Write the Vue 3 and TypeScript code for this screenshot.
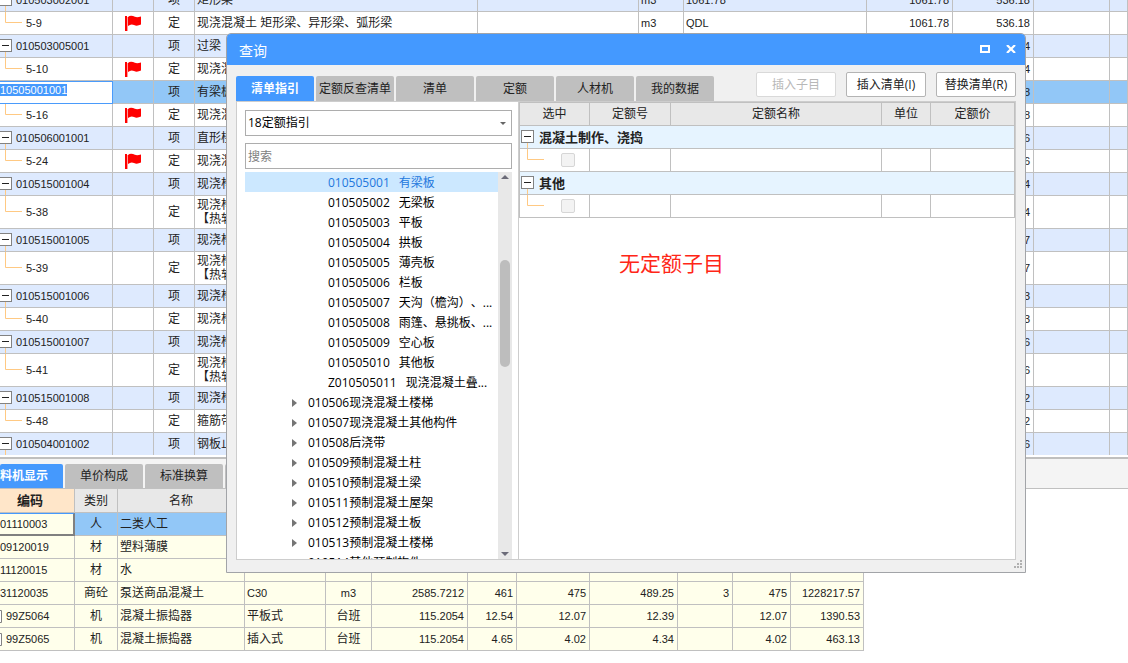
<script setup lang="ts">
import { onMounted, ref } from 'vue'

interface QuotaRow {
  code: string
  child?: boolean
  tall?: boolean
  flag?: boolean
  editing?: boolean
  name: string
  unit?: string
  qty?: string
  price?: string
  total: string
}

const rows: QuotaRow[] = [
  { code: '010503002001', name: '矩形梁', unit: 'm3', qty: '1061.78', price: '1061.78', total: '536.18' },
  { code: '5-9', child: true, flag: true, name: '现浇混凝土 矩形梁、异形梁、弧形梁', unit: 'm3', qty: 'QDL', price: '1061.78', total: '536.18' },
  { code: '010503005001', name: '过梁', total: '4' },
  { code: '5-10', child: true, flag: true, name: '现浇混', total: '4' },
  { code: '10505001001', editing: true, name: '有梁板', total: '8' },
  { code: '5-16', child: true, flag: true, name: '现浇混', total: '8' },
  { code: '010506001001', name: '直形楼', total: '6' },
  { code: '5-24', child: true, flag: true, name: '现浇混', total: '6' },
  { code: '010515001004', name: '现浇构', total: '4' },
  { code: '5-38', child: true, tall: true, name: '现浇构\n【热轧', total: '4' },
  { code: '010515001005', name: '现浇构', total: '7' },
  { code: '5-39', child: true, tall: true, name: '现浇构\n【热轧', total: '7' },
  { code: '010515001006', name: '现浇构', total: '3' },
  { code: '5-40', child: true, name: '现浇构', total: '3' },
  { code: '010515001007', name: '现浇构', total: '6' },
  { code: '5-41', child: true, tall: true, name: '现浇构\n【热轧', total: '6' },
  { code: '010515001008', name: '现浇构', total: '2' },
  { code: '5-48', child: true, name: '箍筋带', total: '2' },
  { code: '010504001002', name: '钢板止', total: '6' },
]

const detailTabs = ['料机显示', '单价构成', '标准换算']

interface Material {
  code: string
  box?: boolean
  kind: string
  name: string
  spec?: string
  unit?: string
  nums: string[]
}

const blank = ['', '', '', '', '', '', '']
const materials: Material[] = [
  { code: '01110003', kind: '人', name: '二类人工', nums: blank },
  { code: '09120019', kind: '材', name: '塑料薄膜', nums: blank },
  { code: '11120015', kind: '材', name: '水', nums: blank },
  { code: '31120035', kind: '商砼', name: '泵送商品混凝土', spec: 'C30', unit: 'm3', nums: ['2585.7212', '461', '475', '489.25', '3', '475', '1228217.57'] },
  { code: '99Z5064', box: true, kind: '机', name: '混凝土振捣器', spec: '平板式', unit: '台班', nums: ['115.2054', '12.54', '12.07', '12.39', '', '12.07', '1390.53'] },
  { code: '99Z5065', box: true, kind: '机', name: '混凝土振捣器', spec: '插入式', unit: '台班', nums: ['115.2054', '4.65', '4.02', '4.34', '', '4.02', '463.13'] },
]

const queryTabs = ['清单指引', '定额反查清单', '清单', '定额', '人材机', '我的数据']
const activeTab = ref(0)

const leaves = [
  ['010505001', '有梁板'],
  ['010505002', '无梁板'],
  ['010505003', '平板'],
  ['010505004', '拱板'],
  ['010505005', '薄壳板'],
  ['010505006', '栏板'],
  ['010505007', '天沟（檐沟）、...'],
  ['010505008', '雨篷、悬挑板、...'],
  ['010505009', '空心板'],
  ['010505010', '其他板'],
  ['Z010505011', '现浇混凝土叠...'],
]
const branches = [
  '010506现浇混凝土楼梯',
  '010507现浇混凝土其他构件',
  '010508后浇带',
  '010509预制混凝土柱',
  '010510预制混凝土梁',
  '010511预制混凝土屋架',
  '010512预制混凝土板',
  '010513预制混凝土楼梯',
  '010514其他预制构件',
]
const groups = ['混凝土制作、浇捣', '其他']
const keyword = ref('')
const guide = ref('18定额指引')

const editor = ref<HTMLInputElement[]>([])
onMounted(() => {
  editor.value[0]?.focus()
  editor.value[0]?.select()
})
</script>

<template>
  <main class="app">
    <section class="upper">
      <table class="grid list">
        <colgroup>
          <col class="u1" /><col class="u2" /><col class="u2" /><col class="u3" /><col class="u4" />
          <col class="u5" /><col class="u6" /><col class="u7" /><col class="u8" /><col class="u9" /><col />
        </colgroup>
        <tbody>
          <tr
            v-for="row in rows"
            :key="row.code"
            :class="{ parent: !row.child, tall: row.tall, current: row.editing }"
          >
            <td class="code">
              <input v-if="row.editing" ref="editor" class="editor" type="text" aria-label="项目编码" :value="row.code" />
              <div v-else-if="row.child" class="node">
                <svg v-if="row.tall" width="22" height="32"><path d="M5.5 0V15.5H22" class="link" /></svg>
                <svg v-else width="22" height="22"><path d="M5.5 0V10.5H22" class="link" /></svg>
                <span class="sub">{{ row.code }}</span>
              </div>
              <div v-else class="node">
                <svg width="12" height="22" viewBox="1 0 12 22">
                  <rect x=".5" y="4.5" width="12" height="12" class="box" />
                  <path d="M3 10.5H10" class="minus" />
                  <path d="M6.5 17V22" class="link" />
                </svg>
                <span class="main">{{ row.code }}</span>
              </div>
            </td>
            <td class="mid">
              <svg v-if="row.flag" class="flag" width="17" height="17" viewBox="0 0 17 17">
                <path d="M0 1H2V16H0Z" fill="#f00" />
                <path d="M2.500 2V16" stroke="#ff9a9a" stroke-width="1" />
                <path d="M3 2Q5 0 8 1Q11 3 16 1.500V9.500Q12 11.500 9 10Q6 8.500 3 11Z" fill="#f00" />
              </svg>
            </td>
            <td class="mid">{{ row.child ? '定' : '项' }}</td>
            <td class="name">{{ row.name }}</td>
            <td></td>
            <td class="num left">{{ row.unit }}</td>
            <td class="num left">{{ row.qty }}</td>
            <td class="num">{{ row.price }}</td>
            <td class="num">{{ row.total }}</td>
            <td></td>
            <td></td>
          </tr>
        </tbody>
      </table>
    </section>

    <nav class="detail-tabs">
      <button v-for="(t, i) in detailTabs" :key="t" type="button" :class="{ on: i === 0 }">{{ t }}</button>
      <button type="button" aria-label="更多"></button>
    </nav>

    <table class="grid materials">
      <colgroup>
        <col class="m1" /><col class="m2" /><col class="m3" /><col class="m4" /><col class="m5" /><col class="m6" />
        <col class="m7" /><col class="m8" /><col class="m9" /><col class="m10" /><col class="m11" /><col class="m8" />
      </colgroup>
      <thead>
        <tr>
          <th class="hot">编码</th>
          <th>类别</th>
          <th>名称</th>
          <th v-for="n in 9" :key="n"></th>
        </tr>
      </thead>
      <tbody>
        <tr v-for="(m, i) in materials" :key="m.code" :class="{ current: i === 0 }">
          <td class="num left flush">
            <div class="mcode">
              <svg v-if="m.box" width="2" height="13"><path d="M0 .5H1.500V12.500H0" class="box" /></svg>
              <span>{{ m.code }}</span>
            </div>
          </td>
          <td class="mid">{{ m.kind }}</td>
          <td class="name">{{ m.name }}</td>
          <td :class="m.spec === 'C30' ? 'num left' : 'name'">{{ m.spec }}</td>
          <td :class="['mid', { num: m.unit === 'm3' }]">{{ m.unit }}</td>
          <td v-for="(v, k) in m.nums" :key="k" class="num">{{ v }}</td>
        </tr>
      </tbody>
    </table>

    <section class="dialog" role="dialog" aria-label="查询">
      <header class="title">
        <h1>查询</h1>
        <button type="button" aria-label="最大化">
          <svg width="10" height="8"><rect x="1" y="1" width="8" height="6" fill="none" stroke="#fff" stroke-width="2" /></svg>
        </button>
        <button type="button" aria-label="关闭">
          <svg width="10" height="8"><path d="M1 0L9 8M9 0L1 8" stroke="#fff" stroke-width="2.200" /></svg>
        </button>
      </header>

      <div class="bar">
        <nav class="tabs">
          <button
            v-for="(t, i) in queryTabs"
            :key="t"
            type="button"
            :class="{ on: i === activeTab }"
            @click="activeTab = i"
          >{{ t }}</button>
        </nav>
        <div class="actions">
          <button type="button" disabled>插入子目</button>
          <button type="button">插入清单(I)</button>
          <button type="button">替换清单(R)</button>
        </div>
      </div>

      <div class="body">
        <aside class="side">
          <div class="combo">
            <select v-model="guide" aria-label="定额指引">
              <option>18定额指引</option>
            </select>
            <svg width="6" height="3"><path d="M0 0H6L3 3Z" fill="#666" /></svg>
          </div>
          <input v-model="keyword" class="search" type="text" placeholder="搜索" aria-label="搜索" />
          <div class="treebox">
            <ul class="tree">
              <li v-for="(l, i) in leaves" :key="l[0]" :class="['leaf', { picked: i === 0 }]">
                <span>{{ l[0] }}</span><span>{{ l[1] }}</span>
              </li>
              <li v-for="b in branches" :key="b" class="branch">
                <svg width="5" height="8"><path d="M0 0L5 4L0 8Z" fill="#757575" /></svg>
                <span>{{ b }}</span>
              </li>
            </ul>
            <div class="scroll">
              <svg width="8" height="4"><path d="M4 0L8 4H0Z" fill="#6b6b78" /></svg>
              <div class="track"><div class="thumb"></div></div>
              <svg width="8" height="4"><path d="M0 0H8L4 4Z" fill="#6b6b78" /></svg>
            </div>
          </div>
        </aside>

        <div class="result">
          <table class="grid quota">
            <colgroup><col class="q1" /><col class="q2" /><col /><col class="q4" /><col class="q5" /></colgroup>
            <thead>
              <tr><th>选中</th><th>定额号</th><th>定额名称</th><th>单位</th><th>定额价</th></tr>
            </thead>
            <tbody v-for="g in groups" :key="g">
              <tr class="group">
                <td colspan="5">
                  <div class="node">
                    <svg width="15" height="22">
                      <rect x="1.500" y="4.500" width="12" height="12" class="box" />
                      <path d="M4 10.500H11" class="minus" />
                      <path d="M7.500 17V22" class="link" />
                    </svg>
                    <strong>{{ g }}</strong>
                  </div>
                </td>
              </tr>
              <tr>
                <td>
                  <div class="node">
                    <svg width="24" height="22"><path d="M7.500 0V10.500H24" class="link" /></svg>
                    <input class="tick" type="checkbox" disabled :aria-label="g" />
                  </div>
                </td>
                <td></td><td></td><td></td><td></td>
              </tr>
            </tbody>
          </table>
          <p class="note">无定额子目</p>
        </div>
      </div>
      <footer class="foot">
        <svg width="9" height="9" fill="#b0b0b0">
          <path d="M6 0h2v2h-2zM3 3h2v2h-2zM6 3h2v2h-2zM0 6h2v2h-2zM3 6h2v2h-2zM6 6h2v2h-2z" />
        </svg>
      </footer>
    </section>
  </main>
</template>

<style>
body {
  margin: 0;
  background: #fff;
}
</style>

<style scoped>
.app {
  position: relative;
  min-height: 100vh;
  overflow: hidden;
  color: #222;
  font: 12px/14px "Liberation Sans", "Noto Sans CJK SC", sans-serif;
  text-spacing-trim: space-all;
}
.app * {
  box-sizing: border-box;
}
button, input, select {
  font: inherit;
  color: inherit;
  margin: 0;
  padding: 0;
  border: 0;
  outline: 0;
}
svg {
  display: block;
  flex: none;
}
.box { fill: #fff; stroke: #828282; }
.minus { stroke: #222; }
.link { fill: none; stroke: #ffc983; }

.grid {
  border-collapse: separate;
  border-spacing: 0;
  table-layout: fixed;
}
.grid td, .grid th {
  height: 23px;
  padding: 0;
  border-right: 1px solid #c0c0c0;
  border-bottom: 1px solid #c0c0c0;
  overflow: hidden;
  white-space: pre;
  font-weight: 400;
}
.grid .mid { text-align: center; }
.grid .name { padding-left: 2px; }
.grid .num {
  padding: 0 3px;
  font-size: 11px;
  text-align: right;
}
.grid .num.left { text-align: left; padding-left: 2px; }
.grid .num.mid { text-align: center; }
.node {
  display: flex;
  align-items: center;
}

/* upper bill list */
.upper {
  overflow: hidden;
  padding-bottom: 2px;
  border-bottom: 2px solid #bfbfbf;
}
.list {
  width: 100%;
  margin-top: -11px;
}
.list tr.tall td { height: 33px; }
.list tr.parent td { background: #deeafe; }
.list tr.current td { background: #92c7f7; }
.list tr:last-child td { height: 22px; border-bottom: 0; }
.list .code { font-size: 11px; }
.main { padding-left: 4px; }
.sub { padding-left: 4px; }
.u1 { width: 113px; }
.u2 { width: 41px; }
.u3 { width: 283px; }
.u4 { width: 161px; }
.u5 { width: 45px; }
.u6 { width: 183px; }
.u7 { width: 86px; }
.u8 { width: 81px; }
.u9 { width: 76px; }
.flag { margin: 0 auto; }
.list tr.current .code {
  border-right: 0;
  border-bottom: 0;
}
.editor {
  display: block;
  width: 100%;
  height: 23px;
  padding-bottom: 6px;
  border: 1px solid #4a9bfb;
  border-left: 0;
  background: #fff;
}
.editor::selection {
  background: #4599fd;
  color: #fff;
}

/* detail pane */
.detail-tabs {
  display: flex;
  gap: 2px;
  height: 30px;
  padding-top: 5px;
  background: #f4f4f4;
  border-bottom: 1px solid #c0c0c0;
}
.detail-tabs button {
  width: 78px;
  background: #bfbfbf;
  border-radius: 2px 2px 0 0;
}
.detail-tabs button.on {
  width: 63px;
  padding-right: 15px;
  background: #4599fd;
  color: #fff;
  font-weight: 700;
}
.materials { width: 864px; }
.materials th {
  height: 24px;
  background: #e8e8e8;
}
.materials td { background: #ffffeb; }
.materials th.hot {
  background: #ffe6c9;
  font-size: 13px;
  font-weight: 700;
  padding-right: 14px;
}
.materials tr.current td { background: #92c7f7; }
.materials tr.current td:first-child {
  background: #ffffeb;
  border-top: 1px solid #4599fd;
  border-right: 2px solid #808080;
  border-bottom: 2px solid #808080;
}
.materials .num.flush { padding: 0; }
.mcode {
  display: flex;
  align-items: center;
}
.mcode svg + span { padding-left: 4px; }
.m1 { width: 75px; }
.m2 { width: 43px; }
.m3 { width: 127px; }
.m4 { width: 81px; }
.m5 { width: 46px; }
.m6 { width: 96px; }
.m7 { width: 49px; }
.m8 { width: 73px; }
.m9 { width: 88px; }
.m10 { width: 55px; }
.m11 { width: 58px; }

/* query window */
.dialog {
  position: absolute;
  top: 33px;
  bottom: 90px;
  left: 226px;
  right: 102px;
  display: flex;
  flex-direction: column;
  background: #f0f0f0;
  border: 1px solid #a2a4a8;
  border-radius: 5px 5px 0 0;
  font-family: "Open Sans", "Noto Sans CJK SC", sans-serif;
}
.title {
  display: flex;
  align-items: center;
  gap: 16px;
  height: 31px;
  padding: 0 9px 0 12px;
  background: #4499ff;
  border-radius: 4px 4px 0 0;
  color: #fff;
}
.title h1 {
  flex: 1;
  margin: 0;
  padding-top: 2px;
  font-size: 14px;
  line-height: 20px;
  font-weight: 400;
}
.title button { background: none; padding-bottom: 2px; }
.bar {
  display: flex;
  justify-content: space-between;
  margin: 0 9px;
  height: 36px;
}
.tabs {
  display: flex;
  gap: 2px;
  padding-top: 11px;
}
.tabs button {
  width: 78px;
  background: #bfbfbf;
  border-radius: 2px 2px 0 0;
  white-space: nowrap;
}
.tabs button.on {
  background: #4499ff;
  color: #fff;
  font-weight: 700;
}
.actions {
  display: flex;
  gap: 10px;
  padding: 7px 0 4px;
}
.actions button {
  width: 80px;
  background: #fff;
  border: 1px solid #b4b4b4;
  border-radius: 2px;
  white-space: nowrap;
}
.actions button:disabled {
  border-color: #d9d9d9;
  color: #b8b8b8;
}
.body {
  flex: 1;
  display: flex;
  min-height: 0;
  margin: 0 9px;
  background: #fff;
  border: 1px solid #cdcdcd;
}
.side {
  display: flex;
  flex-direction: column;
  width: 282px;
  padding: 8px 6px 0 8px;
  border-right: 1px solid #cdcdcd;
}
.combo {
  display: flex;
  align-items: center;
  height: 26px;
  padding: 0 5px 0 2px;
  border: 1px solid #adadad;
}
.combo select {
  flex: 1;
  appearance: none;
  background: #fff;
  color: #000;
}
.search {
  height: 26px;
  margin-top: 7px;
  padding: 0 2px;
  border: 1px solid #adadad;
  background: #fff;
}
.search::placeholder { color: #808080; opacity: 1; }
.treebox {
  flex: 1;
  display: flex;
  min-height: 0;
  margin-top: 3px;
}
.tree {
  flex: 1;
  margin: 0;
  padding: 0;
  list-style: none;
  overflow: hidden;
  color: #000;
}
.tree li {
  display: flex;
  align-items: center;
  height: 20px;
  padding-top: 2px;
  white-space: nowrap;
}
.leaf { gap: 9px; padding-left: 83px; }
.branch { gap: 11px; padding-left: 47px; }
.tree .picked {
  background: #cce8ff;
  color: #2277dd;
}
.scroll {
  display: flex;
  flex-direction: column;
  align-items: center;
  width: 14px;
  padding: 3px 0;
  background: #e8e8e8;
}
.track {
  flex: 1;
  padding-top: 81px;
}
.thumb {
  width: 10px;
  height: 107px;
  border-radius: 5px;
  background: #bdbdbd;
}
.result { flex: 1; }
.quota {
  width: 100%;
  border-left: 1px solid #c0c0c0;
}
.quota th { height: 24px; background: #e8e8e8; border-top: 1px solid #c0c0c0; }
.quota .group td { background: #e6f4ff; }
.quota strong { padding-left: 4px; font-size: 13px; }
.q1 { width: 70px; }
.q2 { width: 81px; }
.q4 { width: 49px; }
.q5 { width: 84px; }
.tick {
  appearance: none;
  width: 14px;
  height: 14px;
  margin-left: 17px;
  border: 1px solid #d6d6d6;
  border-radius: 2px;
  background: #f3f3f3;
}
.note {
  margin: 29px 0 0 100px;
  font-size: 21px;
  line-height: 32px;
  color: #ff2617;
}
.foot {
  display: flex;
  justify-content: flex-end;
  height: 12px;
  padding-right: 2px;
}
</style>
